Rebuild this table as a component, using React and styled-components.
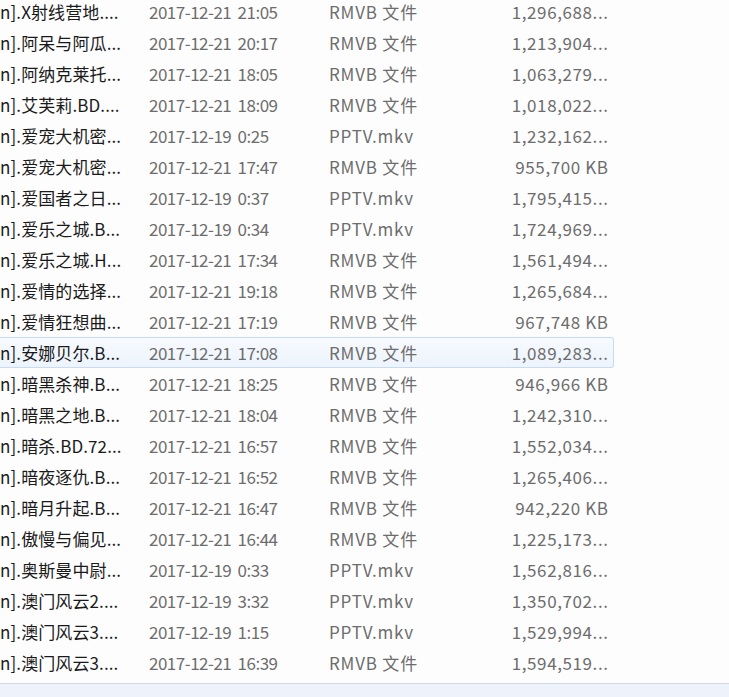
import React from "react";
import styled, { createGlobalStyle } from "styled-components";

const GlobalStyle = createGlobalStyle`
  html, body {
    margin: 0;
    padding: 0;
    background: #ffffff;
    overflow: hidden;
  }
  body {
    font-family: "Noto Sans CJK SC", "Noto Sans", sans-serif;
  }
`;

const files = [
  ["n].X射线营地....", "2017-12-21 21:05", "RMVB 文件", "1,296,688..."],
  ["n].阿呆与阿瓜...", "2017-12-21 20:17", "RMVB 文件", "1,213,904..."],
  ["n].阿纳克莱托...", "2017-12-21 18:05", "RMVB 文件", "1,063,279..."],
  ["n].艾芙莉.BD....", "2017-12-21 18:09", "RMVB 文件", "1,018,022..."],
  ["n].爱宠大机密...", "2017-12-19 0:25", "PPTV.mkv", "1,232,162..."],
  ["n].爱宠大机密...", "2017-12-21 17:47", "RMVB 文件", "955,700 KB"],
  ["n].爱国者之日...", "2017-12-19 0:37", "PPTV.mkv", "1,795,415..."],
  ["n].爱乐之城.B...", "2017-12-19 0:34", "PPTV.mkv", "1,724,969..."],
  ["n].爱乐之城.H...", "2017-12-21 17:34", "RMVB 文件", "1,561,494..."],
  ["n].爱情的选择...", "2017-12-21 19:18", "RMVB 文件", "1,265,684..."],
  ["n].爱情狂想曲...", "2017-12-21 17:19", "RMVB 文件", "967,748 KB"],
  ["n].安娜贝尔.B...", "2017-12-21 17:08", "RMVB 文件", "1,089,283...", true],
  ["n].暗黑杀神.B...", "2017-12-21 18:25", "RMVB 文件", "946,966 KB"],
  ["n].暗黑之地.B...", "2017-12-21 18:04", "RMVB 文件", "1,242,310..."],
  ["n].暗杀.BD.72...", "2017-12-21 16:57", "RMVB 文件", "1,552,034..."],
  ["n].暗夜逐仇.B...", "2017-12-21 16:52", "RMVB 文件", "1,265,406..."],
  ["n].暗月升起.B...", "2017-12-21 16:47", "RMVB 文件", "942,220 KB"],
  ["n].傲慢与偏见...", "2017-12-21 16:44", "RMVB 文件", "1,225,173..."],
  ["n].奥斯曼中尉...", "2017-12-19 0:33", "PPTV.mkv", "1,562,816..."],
  ["n].澳门风云2....", "2017-12-19 3:32", "PPTV.mkv", "1,350,702..."],
  ["n].澳门风云3....", "2017-12-19 1:15", "PPTV.mkv", "1,529,994..."],
  ["n].澳门风云3....", "2017-12-21 16:39", "RMVB 文件", "1,594,519..."],
];

const Window = styled.div`
  display: flex;
  flex-direction: column;
  width: 729px;
  height: 697px;
  background: #fdfdfd;
`;

const List = styled.div`
  flex: 1;
  display: flex;
  flex-direction: column;
  margin-top: -4px;
  overflow: hidden;
`;

const Row = styled.div`
  display: grid;
  grid-template-columns: 149px 180px 150px 129px;
  align-items: center;
  height: 31px;
  box-sizing: border-box;
  font-size: 17px;
  color: #6d6d6d;
  white-space: nowrap;
  border: 1px solid ${(p) => (p.$hot ? "#c6dcf5" : "transparent")};
  border-left: none;
  border-radius: 0 3px 3px 0;
  margin-right: ${(p) => (p.$hot ? "115px" : "0")};
  background: ${(p) =>
    p.$hot ? "linear-gradient(#f7fafe, #edf4fd)" : "transparent"};
`;

const Name = styled.span`
  color: #1a1a1a;
  overflow: hidden;
  letter-spacing: 0.1px;
`;

const Cell = styled.span`
  overflow: hidden;
  letter-spacing: ${(p) => p.$spacing || "0"};
  word-spacing: ${(p) => p.$words || "0"};
`;

const Size = styled.span`
  text-align: right;
  letter-spacing: 0.6px;
  margin-right: -0.6px;
`;

const StatusBar = styled.div`
  height: 13px;
  border-top: 1px solid #d3d8e2;
  background: #eef2fa;
`;

export default function App() {
  return (
    <>
      <GlobalStyle />
      <Window>
        <List>
          {files.map(([name, date, type, size, hot], i) => (
            <Row key={i} $hot={hot}>
              <Name>{name}</Name>
              <Cell $spacing="-0.5px" $words="3px">
                {date}
              </Cell>
              <Cell $spacing="0.8px">{type}</Cell>
              <Size>{size}</Size>
            </Row>
          ))}
        </List>
        <StatusBar />
      </Window>
    </>
  );
}
